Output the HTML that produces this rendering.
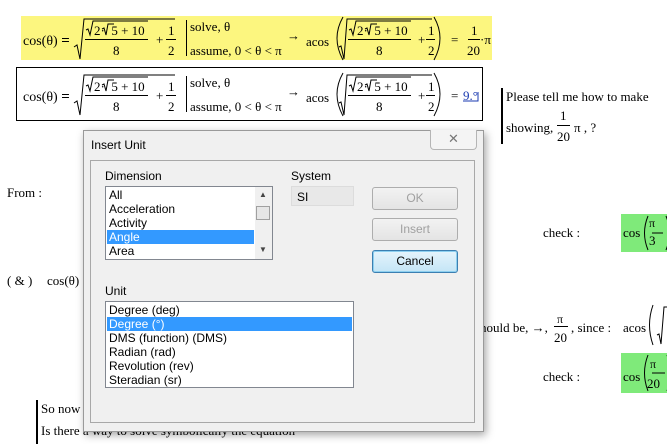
<!DOCTYPE html>
<html><head><meta charset="utf-8">
<style>
*{margin:0;padding:0;box-sizing:border-box}
body{width:667px;height:444px;background:#fff;position:relative;overflow:hidden;font-family:"Liberation Serif",serif;font-size:13px;color:#000}
.a{position:absolute;white-space:nowrap;line-height:1}
.row{position:absolute;left:0;width:667px;height:46px}
.ln{position:absolute;background:#000;height:1px}
.vb{position:absolute;background:#000;width:1px}
.ui{font-family:"Liberation Sans",sans-serif;font-size:12px;color:#000}
.btn{position:absolute;width:86px;height:23px;border:1px solid #adadad;border-radius:3px;background:linear-gradient(#f2f2f2,#e4e4e4);text-align:center;line-height:21px;color:#999}
</style></head><body>

<div style="position:absolute;left:21px;top:16px;width:471px;height:44px;background:#fcf67f"></div>
<div style="position:absolute;left:16px;top:67px;width:467px;height:54px;border:1px solid #000"></div>

<!-- row template -->
<div class="row" style="top:16px">
 <span class="a" style="left:23px;top:18px;font-size:14px">cos(θ) <b style="font-size:15px">=</b></span>
 <svg style="position:absolute;left:0;top:0" width="500" height="46" fill="none" stroke="#000" stroke-width="1">
  <path d="M74 31 L77 29 L80 43 L84 3 L175 3"/>
  <path d="M86 14 L88 13 L90 19 L93 5 L148 5"/>
  <path d="M102 13 L104 12 L106 19 L108 8 L114 8"/>
  <path d="M339 31 L341 30 L344 43 L347 3 L432 3"/>
  <path d="M349 14 L351 13 L353 19 L356 5 L411 5"/>
  <path d="M365 13 L367 12 L369 19 L371 8 L377 8"/>
  <path d="M343 1 Q331 22 343 44"/>
  <path d="M434 1 Q446 22 434 44"/>
 </svg>
 <span class="a" style="left:94px;top:8px">2·&nbsp;&nbsp;5 + 10</span>
 <div class="ln" style="left:85px;top:23px;width:63px"></div>
 <span class="a" style="left:113px;top:28px">8</span>
 <span class="a" style="left:156px;top:17px">+</span>
 <span class="a" style="left:168px;top:8px">1</span>
 <div class="ln" style="left:166px;top:23px;width:10px"></div>
 <span class="a" style="left:168px;top:28px">2</span>
 <div class="vb" style="left:186px;top:4px;height:36px"></div>
 <span class="a" style="left:190px;top:4px">solve, θ</span>
 <span class="a" style="left:190px;top:28px">assume, 0 &lt; θ &lt; π</span>
 <span class="a" style="left:287px;top:13px">→</span>
 <span class="a" style="left:306px;top:19px">acos</span>
 <span class="a" style="left:357px;top:8px">2·&nbsp;&nbsp;5 + 10</span>
 <div class="ln" style="left:348px;top:23px;width:63px"></div>
 <span class="a" style="left:376px;top:28px">8</span>
 <span class="a" style="left:418px;top:17px">+</span>
 <span class="a" style="left:428px;top:8px">1</span>
 <div class="ln" style="left:426px;top:23px;width:9px"></div>
 <span class="a" style="left:428px;top:28px">2</span>
 <span class="a" style="left:451px;top:17px">=</span>
 <span class="a" style="left:471px;top:8px">1</span>
 <div class="ln" style="left:468px;top:23px;width:12px"></div>
 <span class="a" style="left:467px;top:28px">20</span>
 <span class="a" style="left:480px;top:17px">·π</span>
</div>

<div class="row" style="top:72px">
 <span class="a" style="left:23px;top:18px;font-size:14px">cos(θ) <b style="font-size:15px">=</b></span>
 <svg style="position:absolute;left:0;top:0" width="500" height="46" fill="none" stroke="#000" stroke-width="1">
  <path d="M74 31 L77 29 L80 43 L84 3 L175 3"/>
  <path d="M86 14 L88 13 L90 19 L93 5 L148 5"/>
  <path d="M102 13 L104 12 L106 19 L108 8 L114 8"/>
  <path d="M339 31 L341 30 L344 43 L347 3 L432 3"/>
  <path d="M349 14 L351 13 L353 19 L356 5 L411 5"/>
  <path d="M365 13 L367 12 L369 19 L371 8 L377 8"/>
  <path d="M343 1 Q331 22 343 44"/>
  <path d="M434 1 Q446 22 434 44"/>
  <path d="M463 29 L478 29 L478 20" stroke="#1a3ab0"/>
 </svg>
 <span class="a" style="left:94px;top:8px">2·&nbsp;&nbsp;5 + 10</span>
 <div class="ln" style="left:85px;top:23px;width:63px"></div>
 <span class="a" style="left:113px;top:28px">8</span>
 <span class="a" style="left:156px;top:17px">+</span>
 <span class="a" style="left:168px;top:8px">1</span>
 <div class="ln" style="left:166px;top:23px;width:10px"></div>
 <span class="a" style="left:168px;top:28px">2</span>
 <div class="vb" style="left:186px;top:4px;height:36px"></div>
 <span class="a" style="left:190px;top:4px">solve, θ</span>
 <span class="a" style="left:190px;top:28px">assume, 0 &lt; θ &lt; π</span>
 <span class="a" style="left:287px;top:13px">→</span>
 <span class="a" style="left:306px;top:19px">acos</span>
 <span class="a" style="left:357px;top:8px">2·&nbsp;&nbsp;5 + 10</span>
 <div class="ln" style="left:348px;top:23px;width:63px"></div>
 <span class="a" style="left:376px;top:28px">8</span>
 <span class="a" style="left:418px;top:17px">+</span>
 <span class="a" style="left:428px;top:8px">1</span>
 <div class="ln" style="left:426px;top:23px;width:9px"></div>
 <span class="a" style="left:428px;top:28px">2</span>
 <span class="a" style="left:451px;top:17px">=</span>
 <span class="a" style="left:463px;top:17px;color:#1a3ab0">9.°</span>
</div>

<!-- right comment -->
<div class="vb" style="left:501px;top:88px;height:56px;width:2px"></div>
<span class="a" style="left:506px;top:90px">Please tell me how to make</span>
<span class="a" style="left:506px;top:121px">showing,</span>
<span class="a" style="left:560px;top:109px">1</span>
<div class="ln" style="left:557px;top:125px;width:13px"></div>
<span class="a" style="left:557px;top:130px">20</span>
<span class="a" style="left:574px;top:121px">π , ?</span>

<span class="a" style="left:7px;top:186px">From :</span>
<span class="a" style="left:7px;top:274px">( &amp; )</span>
<span class="a" style="left:47px;top:274px">cos(θ)</span>

<span class="a" style="left:543px;top:226px">check :</span>
<div style="position:absolute;left:621px;top:214px;width:46px;height:38px;background:#7fea7a"></div>
<span class="a" style="left:623px;top:226px">cos</span>
<svg style="position:absolute;left:640px;top:214px" width="27" height="38" fill="none" stroke="#000"><path d="M8 2 Q1 19 8 36"/><path d="M26 2 Q33 19 26 36"/><path d="M12 19 L23 19"/></svg>
<span class="a" style="left:654px;top:204px"></span>
<span class="a" style="left:649px;top:217px;font-size:12px">π</span>
<span class="a" style="left:649px;top:234px">3</span>

<span class="a" style="left:480px;top:321px">hould be, →,</span>
<span class="a" style="left:557px;top:313px;font-size:12px">π</span>
<div class="ln" style="left:554px;top:326px;width:14px"></div>
<span class="a" style="left:554px;top:331px">20</span>
<span class="a" style="left:571px;top:321px">, since :</span>
<span class="a" style="left:623px;top:321px">acos</span>
<svg style="position:absolute;left:645px;top:303px" width="22" height="44" fill="none" stroke="#000"><path d="M8 2 Q1 22 8 42"/><path d="M12 32 L14 31 L16 41 L19 4 L22 4"/></svg>

<span class="a" style="left:543px;top:370px">check :</span>
<div style="position:absolute;left:621px;top:353px;width:46px;height:40px;background:#7fea7a"></div>
<span class="a" style="left:623px;top:370px">cos</span>
<svg style="position:absolute;left:640px;top:353px" width="27" height="40" fill="none" stroke="#000"><path d="M8 2 Q1 20 8 38"/><path d="M12 20 L25 20"/><path d="M27 2 Q33 20 27 38"/></svg>
<span class="a" style="left:650px;top:358px;font-size:12px">π</span>
<span class="a" style="left:647px;top:377px">20</span>

<div class="vb" style="left:36px;top:400px;height:44px;width:2px"></div>
<span class="a" style="left:41px;top:402px">So now</span>
<span class="a" style="left:41px;top:424px">Is there a way to solve symbolically the equation</span>

<!-- dialog -->
<div style="position:absolute;left:83px;top:130px;width:401px;height:302px;background:#f0f0f0;border:1px solid #9a9a9a;box-shadow:2px 3px 8px rgba(0,0,0,.35)"></div>
<span class="a ui" style="left:91px;top:139px">Insert Unit</span>
<div style="position:absolute;left:430px;top:130px;width:47px;height:20px;border:1px solid #b5b5b5;border-top:none;border-radius:0 0 4px 4px;background:#f4f4f4;text-align:center;font:13px 'Liberation Sans',sans-serif;color:#777;line-height:18px">✕</div>
<div style="position:absolute;left:90px;top:160px;width:385px;height:263px;border:1px solid #a8a8a8;background:#f0f0f0"></div>
<span class="a ui" style="left:105px;top:170px">Dimension</span>
<span class="a ui" style="left:291px;top:170px">System</span>
<div style="position:absolute;left:291px;top:186px;width:63px;height:20px;background:#e8e8e8;border:1px solid #dcdcdc"></div>
<span class="a ui" style="left:297px;top:191px">SI</span>

<div style="position:absolute;left:105px;top:186px;width:168px;height:74px;background:#fff;border:1px solid #828790"></div>
<div style="position:absolute;left:107px;top:230px;width:147px;height:14px;background:#3399ff"></div>
<div style="position:absolute;left:255px;top:187px;width:17px;height:72px;background:#f0f0f0"></div>
<div style="position:absolute;left:256px;top:206px;width:14px;height:14px;background:#e6e6e6;border:1px solid #a0a0a0"></div>
<span class="a" style="left:259px;top:191px;font-size:8px;color:#444">▲</span>
<span class="a" style="left:259px;top:246px;font-size:8px;color:#444">▼</span>
<span class="a ui" style="left:109px;top:189px">All</span>
<span class="a ui" style="left:109px;top:203px">Acceleration</span>
<span class="a ui" style="left:109px;top:217px">Activity</span>
<span class="a ui" style="left:109px;top:231px;color:#fff">Angle</span>
<span class="a ui" style="left:109px;top:245px">Area</span>

<span class="a ui" style="left:105px;top:285px">Unit</span>
<div style="position:absolute;left:105px;top:301px;width:249px;height:87px;background:#fff;border:1px solid #828790"></div>
<div style="position:absolute;left:107px;top:317px;width:245px;height:14px;background:#3399ff"></div>
<span class="a ui" style="left:109px;top:304px">Degree (deg)</span>
<span class="a ui" style="left:109px;top:318px;color:#fff">Degree (°)</span>
<span class="a ui" style="left:109px;top:332px">DMS (function) (DMS)</span>
<span class="a ui" style="left:109px;top:346px">Radian (rad)</span>
<span class="a ui" style="left:109px;top:360px">Revolution (rev)</span>
<span class="a ui" style="left:109px;top:374px">Steradian (sr)</span>

<div class="btn ui" style="left:372px;top:187px;color:#a0a0a0">OK</div>
<div class="btn ui" style="left:372px;top:218px;color:#a0a0a0">Insert</div>
<div class="btn ui" style="left:372px;top:250px;color:#000;border-color:#3c7fb1;background:linear-gradient(#e5f4fc,#c4e5f6);box-shadow:inset 0 0 0 1px #8ed0f0">Cancel</div>
</body></html>
